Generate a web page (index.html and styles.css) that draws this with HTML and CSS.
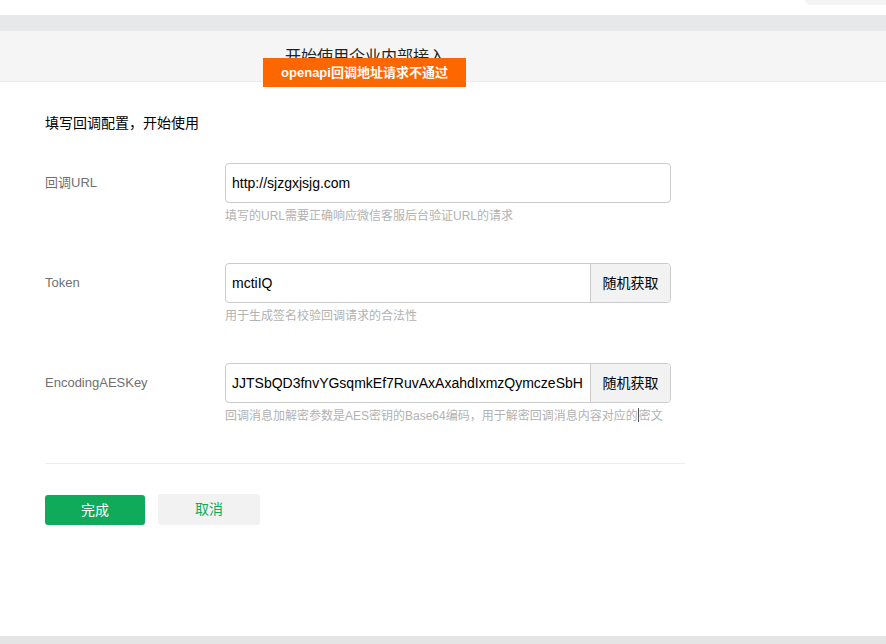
FILE: index.html
```html
<!DOCTYPE html>
<html lang="zh-CN">
<head>
<meta charset="utf-8">
<title>开始使用企业内部接入</title>
<link rel="stylesheet" href="styles.css">
</head>
<body>
<div class="topbar"><div class="topbar-pill"></div></div>
<div class="band"></div>
<div class="panel">
  <div class="panel-head">
    <div class="panel-title">开始使用企业内部接入</div>
    <div class="toast">openapi回调地址请求不通过</div>
  </div>
  <div class="panel-body">
    <div class="section-title">填写回调配置，开始使用</div>
    <div class="form-row">
      <div class="label">回调URL</div>
      <div class="field">
        <div class="input-wrap">
          <div class="input full">http://sjzgxjsjg.com</div>
        </div>
        <div class="hint">填写的URL需要正确响应微信客服后台验证URL的请求</div>
      </div>
    </div>
    <div class="form-row">
      <div class="label">Token</div>
      <div class="field">
        <div class="input-wrap">
          <div class="input">mctiIQ</div>
          <div class="addon">随机获取</div>
        </div>
        <div class="hint">用于生成签名校验回调请求的合法性</div>
      </div>
    </div>
    <div class="form-row">
      <div class="label">EncodingAESKey</div>
      <div class="field">
        <div class="input-wrap">
          <div class="input">JJTSbQD3fnvYGsqmkEf7RuvAxAxahdIxmzQymczeSbH</div>
          <div class="addon">随机获取</div>
        </div>
        <div class="hint">回调消息加解密参数是AES密钥的Base64编码，用于解密回调消息内容对应的<span class="caret"></span>密文</div>
      </div>
    </div>
    <div class="divider"></div>
    <div class="actions">
      <div class="btn btn-primary">完成</div>
      <div class="btn btn-default">取消</div>
    </div>
  </div>
</div>
<div class="footer-band"></div>
</body>
</html>
```

FILE: styles.css
```css
html, body {
  margin: 0;
  padding: 0;
  background: #ffffff;
  font-family: "Liberation Sans", "Noto Sans CJK SC", sans-serif;
  color: #000;
}

.topbar {
  height: 15px;
  display: flex;
  justify-content: flex-end;
}

.topbar-pill {
  width: 81px;
  height: 5px;
  background: #f4f4f5;
  border-bottom-left-radius: 6px;
}

.band {
  height: 16px;
  background: #e7e8ea;
}

.panel-head {
  position: relative;
  height: 50px;
  background: #f5f5f5;
  border-bottom: 1px solid #ebebeb;
  box-sizing: content-box;
}

.panel-title {
  padding: 15px 0 0 285px;
  font-size: 16px;
  line-height: 22px;
  color: #222;
}

.toast {
  position: absolute;
  left: 263px;
  top: 27px;
  width: 203px;
  height: 29px;
  background: #fe6600;
  color: #fff;
  font-size: 13px;
  font-weight: 600;
  line-height: 29px;
  text-align: center;
  z-index: 2;
}

.panel-body {
  height: 554px;
  box-sizing: border-box;
  padding: 31px 0 0 45px;
}

.section-title {
  font-size: 14px;
  line-height: 20px;
  margin-bottom: 30px;
}

.form-row {
  display: flex;
  margin-bottom: 39px;
}

.label {
  width: 180px;
  font-size: 13px;
  line-height: 40px;
  color: #707070;
}

.field {
  width: 446px;
}

.input-wrap {
  display: flex;
  height: 40px;
  box-sizing: border-box;
  border: 1px solid #cccccc;
  border-radius: 4px;
  overflow: hidden;
}

.input {
  flex: 1;
  padding-left: 6px;
  font-size: 14px;
  line-height: 38px;
  white-space: nowrap;
  overflow: hidden;
}

.addon {
  width: 79px;
  background: #f2f2f2;
  border-left: 1px solid #cccccc;
  font-size: 14px;
  line-height: 38px;
  text-align: center;
}

.hint {
  margin-top: 5px;
  font-size: 12px;
  line-height: 16px;
  color: #b2b2b2;
  white-space: nowrap;
}

.caret {
  display: inline-block;
  width: 1px;
  height: 14px;
  background: #555;
  vertical-align: -2px;
}

.divider {
  width: 640px;
  height: 1px;
  background: #ededed;
  margin-top: 0;
}

.actions {
  display: flex;
  gap: 13px;
  margin-top: 31px;
}

.btn {
  height: 30px;
  line-height: 30px;
  font-size: 14px;
  text-align: center;
  border-radius: 3px;
}

.btn-primary {
  width: 100px;
  background: #0fab5b;
  color: #fff;
}

.btn-default {
  width: 102px;
  height: 31px;
  margin-top: -1px;
  background: #f2f2f2;
  color: #0fab5b;
}

.footer-band {
  height: 8px;
  background: #e4e4e5;
}
```
